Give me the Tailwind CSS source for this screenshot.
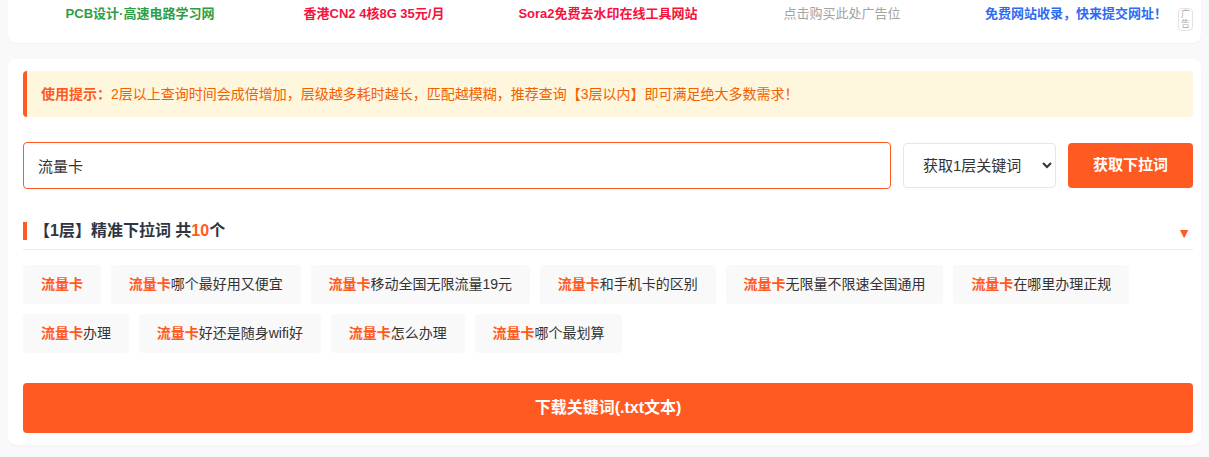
<!DOCTYPE html>
<html lang="zh-CN">
<head>
  <meta charset="UTF-8" />
  <title>下拉词</title>
  <script src="https://cdn.jsdelivr.net/npm/@tailwindcss/browser@4"></script>
</head>
<body class="bg-[#f9f9f9] h-[457px] overflow-hidden font-['Liberation_Sans','Noto_Sans_CJK_SC',sans-serif] text-[#333]">

  <!-- top ads -->
  <div class="relative mx-2 h-[43px] bg-white rounded-b-lg shadow-[0_1px_2px_rgba(0,0,0,0.04)] pl-[15px] pr-2">
    <div class="grid grid-cols-5 text-[13px] leading-[28px] text-center">
      <a class="font-bold text-[#2e9e46]">PCB设计·高速电路学习网</a>
      <a class="font-bold text-[#f5123d]">香港CN2 4核8G 35元/月</a>
      <a class="font-bold text-[#f5123d]">Sora2免费去水印在线工具网站</a>
      <a class="text-[#a3a3a3]">点击购买此处广告位</a>
      <a class="font-bold text-[#2f6bf0]">免费网站收录，快来提交网址！</a>
    </div>
    <span class="absolute right-2 top-2 w-[15px] h-[23px] border border-[#e2e2e2] rounded-sm bg-white text-[9px] leading-[10px] text-center text-[#aaa]">广告</span>
  </div>

  <!-- main card -->
  <div class="mx-2 mt-4 h-[386px] bg-white rounded-lg shadow-[0_1px_2px_rgba(0,0,0,0.04)] pl-[15px] pr-2 pt-3">
    <div class="h-[46px] flex items-center pl-[14px] bg-[#fff6de] border-l-4 border-[#ff5a22] rounded text-sm text-[#f26100]">
      <b class="font-bold text-[#ff5a22]">使用提示：</b>2层以上查询时间会成倍增加，层级越多耗时越长，匹配越模糊，推荐查询【3层以内】即可满足绝大多数需求！
    </div>

    <div class="mt-[25px] flex items-center gap-3">
      <input value="流量卡" class="flex-1 h-[47px] px-[14px] border border-[#ff5a22] rounded text-[15px] text-[#333] outline-none" />
      <select class="w-[153px] h-[45px] pl-[15px] pr-1 border border-[#e2e6ee] rounded bg-white text-[15px] text-[#333]">
        <option>获取1层关键词</option>
      </select>
      <button class="w-[125px] h-[45px] bg-[#ff5a22] rounded text-[15px] font-bold text-white">获取下拉词</button>
    </div>

    <div class="mt-[33px] h-[28px] border-b border-[#ececec] relative">
      <h2 class="h-[18px] flex items-center border-l-4 border-[#ff5a22] pl-[7px] text-base font-bold text-[#2f3542]">【1层】精准下拉词 共<span class="text-[#ff5a22]">10</span>个</h2>
      <span class="absolute right-[2px] top-[2px] text-sm leading-[18px] text-[#ff5a22]">▼</span>
    </div>

    <div class="mt-[15px] flex flex-wrap gap-[10px] text-sm leading-[39px] text-[#333]">
      <span class="px-[17.9px] h-[39px] bg-[#f9f9f9] rounded"><b class="text-[#ff5a22]">流量卡</b></span>
      <span class="px-[17.9px] h-[39px] bg-[#f9f9f9] rounded"><b class="text-[#ff5a22]">流量卡</b>哪个最好用又便宜</span>
      <span class="px-[17.9px] h-[39px] bg-[#f9f9f9] rounded"><b class="text-[#ff5a22]">流量卡</b>移动全国无限流量19元</span>
      <span class="px-[17.9px] h-[39px] bg-[#f9f9f9] rounded"><b class="text-[#ff5a22]">流量卡</b>和手机卡的区别</span>
      <span class="px-[17.9px] h-[39px] bg-[#f9f9f9] rounded"><b class="text-[#ff5a22]">流量卡</b>无限量不限速全国通用</span>
      <span class="px-[17.9px] h-[39px] bg-[#f9f9f9] rounded"><b class="text-[#ff5a22]">流量卡</b>在哪里办理正规</span>
      <span class="px-[17.9px] h-[39px] bg-[#f9f9f9] rounded"><b class="text-[#ff5a22]">流量卡</b>办理</span>
      <span class="px-[17.9px] h-[39px] bg-[#f9f9f9] rounded"><b class="text-[#ff5a22]">流量卡</b>好还是随身wifi好</span>
      <span class="px-[17.9px] h-[39px] bg-[#f9f9f9] rounded"><b class="text-[#ff5a22]">流量卡</b>怎么办理</span>
      <span class="px-[17.9px] h-[39px] bg-[#f9f9f9] rounded"><b class="text-[#ff5a22]">流量卡</b>哪个最划算</span>
    </div>

    <button class="mt-[30px] w-full h-[50px] bg-[#ff5a22] rounded text-base font-bold text-white">下载关键词(.txt文本)</button>
  </div>

</body>
</html>
